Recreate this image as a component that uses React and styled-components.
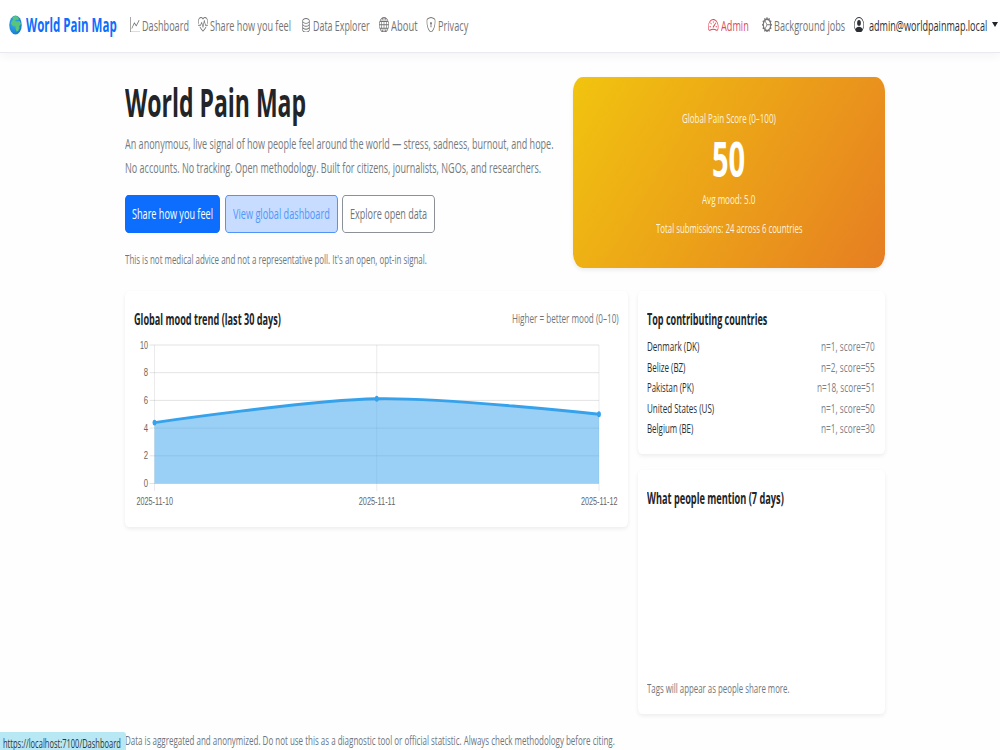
import { useLayoutEffect, useRef, useState } from "react";
import styled, { createGlobalStyle } from "styled-components";
import {
  BsGraphUp,
  BsHeartPulse,
  BsDatabase,
  BsGlobe,
  BsShieldLock,
  BsSpeedometer2,
  BsGearWideConnected,
  BsPersonCircle,
} from "react-icons/bs";

const GlobalStyle = createGlobalStyle`
  *{
    box-sizing: border-box;
    margin: 0;
    padding: 0;
  }
  body{
    background: #fefefe;
    font-family: "Open Sans", "Noto Sans", sans-serif;
    font-size: 15.3px;
    color: #212529;
    overflow: hidden;
  }
`

const Page = styled.div`
  position: relative;
  width: 1000px;
  height: 750px;
  overflow: hidden;
`

const TextBox = styled.span`
  display: block;
  flex: none;
  width: ${({ $width }) => $width}px;
  white-space: nowrap;
  > span{
    display: inline-block;
    transform-origin: 0 50%;
  }
`

// condensed text: the line is narrowed until it fills exactly `width`
const Condensed = ({ width, children }) => {
  const ref = useRef(null)
  const [scale, setScale] = useState(1)

  useLayoutEffect(() => {
    setScale(width / ref.current.offsetWidth)
  }, [width, children])

  return (
    <TextBox $width={width}>
      <span ref={ref} style={{ transform: `scaleX(${scale})` }}>{children}</span>
    </TextBox>
  )
}

const Navbar = styled.nav`
  display: flex;
  align-items: center;
  height: 53px;
  padding: 0 2px 2px 9px;
  background: #fff;
  border-bottom: 1px solid #e8eaef;
  box-shadow: 0 3px 10px rgba(0, 0, 0, 0.045);
`

const Brand = styled.a`
  display: flex;
  align-items: center;
  gap: 4px;
  margin-right: 13px;
  font-size: 19px;
  font-weight: 700;
  color: #0d6efd;
`

const NavLink = styled.a`
  display: flex;
  align-items: center;
  gap: ${({ $gap }) => $gap || 2}px;
  margin-right: ${({ $after }) => $after || 0}px;
  color: ${({ $color }) => $color || "#747474"};
  svg{
    flex: none;
    width: ${({ $icon }) => $icon || 10}px;
    height: 15.7px;
    position: relative;
    top: -0.5px;
  }
`

const Spacer = styled.div`
  flex: 1;
`

const Caret = styled.span`
  width: 6px;
  margin-left: 5px;
  border-top: 5px solid #212529;
  border-left: 3px solid transparent;
  border-right: 3px solid transparent;
  position: relative;
  top: -1px;
`

const Main = styled.main`
  width: 760px;
  margin: 24px 0 0 124.6px;
`

const Hero = styled.section`
  display: flex;
  justify-content: space-between;
  height: 191px;
`

const Title = styled.h1`
  margin-top: 1px;
  font-size: 38.5px;
  line-height: 48px;
  font-weight: 700;
`

const Lead = styled.div`
  margin-top: 5px;
  line-height: 24px;
  color: #737a80;
`

const Buttons = styled.div`
  display: flex;
  gap: 4.5px;
  margin-top: 15.5px;
`

const variants = {
  primary: "color: #fff; background: #0d6efd; border-color: #0d6efd;",
  hovered: "color: #4f98fb; background: #c7dcfe; border-color: #4f94f8;",
  outline: "color: #6c757d; background: #fff; border-color: #8b9197;",
}

const Button = styled.button`
  display: flex;
  align-items: center;
  justify-content: center;
  width: ${({ $width }) => $width}px;
  height: 38px;
  padding-bottom: 2px;
  border: 1px solid;
  border-radius: 3.5px / 5px;
  font: inherit;
  ${({ $variant }) => variants[$variant]}
`

const Small = styled.div`
  font-size: 13.3px;
  line-height: 20.5px;
  color: ${({ $color }) => $color || "#6f777e"};
  margin-top: ${({ $top }) => $top || 0}px;
`

const ScoreCard = styled.div`
  display: flex;
  flex-direction: column;
  align-items: center;
  width: 311.5px;
  height: 191px;
  padding-top: 31px;
  border-radius: 10px / 15px;
  background: linear-gradient(121deg, #f1c40f, #e67e22);
  box-shadow: 0 2px 4px rgba(0, 0, 0, 0.08);
`

const Score = styled.div`
  margin-top: 1px;
  font-size: 47.5px;
  line-height: 58px;
  font-weight: 700;
  color: #fff;
`

const Grid = styled.section`
  display: flex;
  align-items: flex-start;
  gap: 9.5px;
  margin-top: 23px;
`

const Column = styled.div`
  display: flex;
  flex-direction: column;
  gap: 16px;
`

const Card = styled.div`
  display: flex;
  flex-direction: column;
  width: ${({ $width }) => $width}px;
  height: ${({ $height }) => $height}px;
  padding: 17px 9.5px 16px;
  border-radius: 4px / 6px;
  background: #fff;
  box-shadow: 0 2px 4px rgba(0, 0, 0, 0.07);
`

const CardHead = styled.div`
  display: flex;
  justify-content: space-between;
  align-items: center;
  height: 21px;
  flex: none;
  font-weight: 700;
  ${Small}{
    font-weight: 400;
  }
`

const Countries = styled.ul`
  margin-top: 7px;
  list-style: none;
`

const Country = styled.li`
  display: flex;
  justify-content: space-between;
  font-size: 13.3px;
  line-height: 20.5px;
  color: #2b2f33;
`

const Push = styled.div`
  margin-top: auto;
`

const Footer = styled.footer`
  margin: 16px 0 0;
`

const ChartSvg = styled.svg`
  display: block;
  width: 503px;
  height: 180px;
  margin: 1px -9.5px 0;
  flex: none;
  overflow: visible;
  text{
    font-family: "Liberation Sans", Arial, sans-serif;
    font-size: 11.8px;
    fill: #666;
  }
`

const StatusUrl = styled.div`
  position: absolute;
  left: 0;
  bottom: 0;
  width: 126px;
  height: 18px;
  padding: 2px 0 0 3px;
  border-radius: 0 3px 0 0;
  background: #b8e8f3;
  font-size: 12.5px;
  line-height: 20px;
  color: #333;
`

const EarthIcon = () => (
  <svg width="13" height="20" viewBox="0 0 26 40">
    <defs>
      <radialGradient id="sea" cx="0.4" cy="0.4" r="0.65">
        <stop offset="0" stopColor="#35b0f2" />
        <stop offset="1" stopColor="#1779c9" />
      </radialGradient>
    </defs>
    <ellipse cx="13" cy="20" rx="12.5" ry="19" fill="url(#sea)" />
    <path d="M7 4 L12 2 L17 3 L20 8 L18 10 L14 9 L12 12 L16 13 L21 12 L24 17 L22 21 L20 22 L21 26 L18 32 L15 33 L13 27 L13 23 L8 22 L4 18 L5 13 L8 10 Z" fill="#58c57b" />
  </svg>
)

const yTicks = [10, 8, 6, 4, 2, 0]
const days = ["2025-11-10", "2025-11-11", "2025-11-12"]
const xAt = (i) => 29.5 + i * 222.25
const yAt = (value) => 153.5 - value * 13.85
const points = [4.4, 6.12, 5].map((value, i) => [xAt(i), yAt(value)])

const MoodChart = () => {
  const [a, b, c] = points
  const line = `M${a} C${a} ${b[0] - 67},${b[1] + 1.3} ${b} C${b[0] + 67},${b[1] - 1.3} ${c} ${c}`

  return (
    <ChartSvg viewBox="0 0 503 180">
      {yTicks.map((tick) => (
        <g key={tick}>
          <path d={`M24.5 ${yAt(tick)}H${xAt(2)}`} stroke="#000" strokeOpacity="0.11" />
          <text x={tick === 10 ? 15 : 18.7} y={yAt(tick) + 3.6} textLength={tick === 10 ? 8 : 4.3} lengthAdjust="spacingAndGlyphs">{tick}</text>
        </g>
      ))}
      {days.map((day, i) => (
        <g key={day}>
          <path d={`M${xAt(i)} ${yAt(10)}V161`} stroke="#000" strokeOpacity="0.1" strokeWidth="0.8" />
          <text x={xAt(i) - 18} y="175" textLength="36.5" lengthAdjust="spacingAndGlyphs">{day}</text>
        </g>
      ))}
      <path d={`${line} V${yAt(0)} H${xAt(0)} Z`} fill="#36a2eb" fillOpacity="0.5" />
      <path d={line} fill="none" stroke="#36a2eb" strokeWidth="2.8" />
      {points.map(([x, y]) => (
        <ellipse key={x} cx={x} cy={y} rx="1.9" ry="2.9" fill="#36a2eb" />
      ))}
    </ChartSvg>
  )
}

const countries = [
  { name: "Denmark (DK)", width: 52, stats: "n=1, score=70", statsWidth: 54 },
  { name: "Belize (BZ)", width: 38.5, stats: "n=2, score=55", statsWidth: 54 },
  { name: "Pakistan (PK)", width: 47, stats: "n=18, score=51", statsWidth: 58 },
  { name: "United States (US)", width: 67, stats: "n=1, score=50", statsWidth: 54 },
  { name: "Belgium (BE)", width: 46.5, stats: "n=1, score=30", statsWidth: 54 },
]

export default function App() {
  return (
    <Page>
      <GlobalStyle />
      <Navbar>
        <Brand>
          <EarthIcon />
          <Condensed width={91}>World Pain Map</Condensed>
        </Brand>
        <NavLink $after={9}>
          <BsGraphUp preserveAspectRatio="none" />
          <Condensed width={47}>Dashboard</Condensed>
        </NavLink>
        <NavLink $after={9.5}>
          <BsHeartPulse preserveAspectRatio="none" />
          <Condensed width={81}>Share how you feel</Condensed>
        </NavLink>
        <NavLink $after={9}>
          <BsDatabase preserveAspectRatio="none" />
          <Condensed width={57}>Data Explorer</Condensed>
        </NavLink>
        <NavLink $after={9}>
          <BsGlobe preserveAspectRatio="none" />
          <Condensed width={26.5}>About</Condensed>
        </NavLink>
        <NavLink>
          <BsShieldLock preserveAspectRatio="none" />
          <Condensed width={30}>Privacy</Condensed>
        </NavLink>
        <Spacer />
        <NavLink $color="#e04a58" $after={14} $icon={10.5}>
          <BsSpeedometer2 preserveAspectRatio="none" />
          <Condensed width={27.5}>Admin</Condensed>
        </NavLink>
        <NavLink $after={9}>
          <BsGearWideConnected preserveAspectRatio="none" />
          <Condensed width={71}>Background jobs</Condensed>
        </NavLink>
        <NavLink $color="#2c3034" $gap={5}>
          <BsPersonCircle preserveAspectRatio="none" />
          <Condensed width={118}>admin@worldpainmap.local</Condensed>
        </NavLink>
        <Caret />
      </Navbar>

      <Main>
        <Hero>
          <div>
            <Title>
              <Condensed width={181}>World Pain Map</Condensed>
            </Title>
            <Lead>
              <Condensed width={428.5}>An anonymous, live signal of how people feel around the world — stress, sadness, burnout, and hope.</Condensed>
              <Condensed width={416}>No accounts. No tracking. Open methodology. Built for citizens, journalists, NGOs, and researchers.</Condensed>
            </Lead>
            <Buttons>
              <Button $width={95.5} $variant="primary">
                <Condensed width={81}>Share how you feel</Condensed>
              </Button>
              <Button $width={113} $variant="hovered">
                <Condensed width={97}>View global dashboard</Condensed>
              </Button>
              <Button $width={92.5} $variant="outline">
                <Condensed width={77}>Explore open data</Condensed>
              </Button>
            </Buttons>
            <Small $top={16.5}>
              <Condensed width={302}>This is not medical advice and not a representative poll. It's an open, opt-in signal.</Condensed>
            </Small>
          </div>
          <ScoreCard>
            <Small $color="#fdf3dd">
              <Condensed width={94}>Global Pain Score (0–100)</Condensed>
            </Small>
            <Score>
              <Condensed width={33}>50</Condensed>
            </Score>
            <Small $color="#fdf3dd" $top={1}>
              <Condensed width={53.5}>Avg mood: 5.0</Condensed>
            </Small>
            <Small $color="#fdf3dd" $top={8.5}>
              <Condensed width={146.5}>Total submissions: 24 across 6 countries</Condensed>
            </Small>
          </ScoreCard>
        </Hero>

        <Grid>
          <Card $width={503.5} $height={236}>
            <CardHead>
              <Condensed width={147}>Global mood trend (last 30 days)</Condensed>
              <Small>
                <Condensed width={107}>Higher = better mood (0–10)</Condensed>
              </Small>
            </CardHead>
            <MoodChart />
          </Card>
          <Column>
            <Card $width={247} $height={163}>
              <CardHead>
                <Condensed width={120.5}>Top contributing countries</Condensed>
              </CardHead>
              <Countries>
                {countries.map((c) => (
                  <Country key={c.name}>
                    <Condensed width={c.width}>{c.name}</Condensed>
                    <Small $color="#7a8188">
                      <Condensed width={c.statsWidth}>{c.stats}</Condensed>
                    </Small>
                  </Country>
                ))}
              </Countries>
            </Card>
            <Card $width={247} $height={244}>
              <CardHead>
                <Condensed width={136.5}>What people mention (7 days)</Condensed>
              </CardHead>
              <Push>
                <Small>
                  <Condensed width={142.5}>Tags will appear as people share more.</Condensed>
                </Small>
              </Push>
            </Card>
          </Column>
        </Grid>

        <Footer>
          <Small>
            <Condensed width={490}>Data is aggregated and anonymized. Do not use this as a diagnostic tool or official statistic. Always check methodology before citing.</Condensed>
          </Small>
        </Footer>
      </Main>

      <StatusUrl>
        <Condensed width={118}>https://localhost:7100/Dashboard</Condensed>
      </StatusUrl>
    </Page>
  )
}
